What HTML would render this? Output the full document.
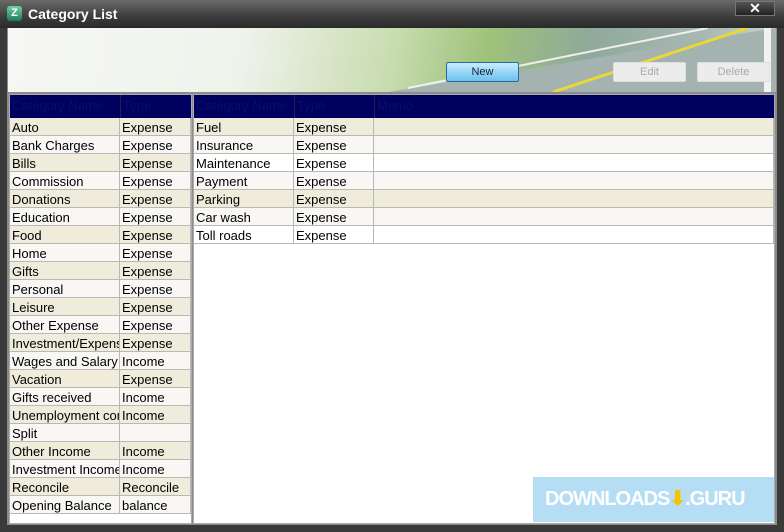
<!DOCTYPE html>
<html><head><style>
*{margin:0;padding:0;box-sizing:border-box}
body{width:784px;height:532px;background:#3a3a3a;position:relative;overflow:hidden;font-family:"Liberation Sans",sans-serif}
.title{position:absolute;left:0;top:0;width:784px;height:28px;background:linear-gradient(#6a6a6a,#3c3c3c 60%,#2a2a2a);}
.title .ic{position:absolute;left:7px;top:6px;width:15px;height:15px;border-radius:3px;background:linear-gradient(#6fd3a8,#1c7a52);color:#fff;font:bold 11px "Liberation Sans";text-align:center;line-height:15px}
.title .t{position:absolute;left:28px;top:6px;color:#fff;font:bold 14px "Liberation Sans",sans-serif}
.x{position:absolute;left:735px;top:1px;width:40px;height:15px;background:linear-gradient(#555,#222);border:1px solid #777;color:#fff;font:bold 14px sans-serif;text-align:center;line-height:13px}
.main{position:absolute;left:7px;top:28px;width:770px;height:497px;background:#8c8c8c}
.banner{position:absolute;left:8px;top:28px;width:768px;height:64px;background:linear-gradient(100deg,#f6f7f4 0%,#f0f3ec 30%,#c8dcb0 50%,#9ec27a 62%,#8fa99a 75%,#a9b9b5 90%,#cfd8d4 100%);overflow:hidden}
.btn{position:absolute;top:34px;height:20px;font:11px "Liberation Sans";text-align:center;line-height:18px;border-radius:2px}
.grid{position:absolute;background:#fff;border:1px solid #aaa}
.hd{position:absolute;top:0;height:23px;background:#000060;color:#0c0c6c;font:13px "Liberation Sans";padding:3px 2px}
.r{position:absolute;height:18px;font:13px "Liberation Sans",sans-serif;color:#000;border-bottom:1px solid #b8b8b8;border-right:1px solid #b8b8b8;padding:2px 2px 0;white-space:nowrap;overflow:hidden;line-height:16px}
.wm{position:absolute;left:533px;top:477px;width:241px;height:45px;background:#b5ddf4;color:#fff;font:bold 20px "Liberation Sans",sans-serif;line-height:45px;padding-left:12px;letter-spacing:-1px;white-space:nowrap;overflow:hidden}
</style></head><body>
<div class="title"><div class="ic">Z</div><div class="t">Category List</div><div class="x">✕</div></div>
<div class="main"></div>
<div class="banner">
<svg width="768" height="64" style="position:absolute;left:0;top:0">
<polygon points="380,64 768,0 768,64" fill="#a4b3b0"/>
<line x1="545" y1="64" x2="740" y2="0" stroke="#e8d83a" stroke-width="3"/>
<line x1="400" y1="60" x2="700" y2="0" stroke="#f0f0f0" stroke-width="2"/>
<rect x="756" y="0" width="7" height="64" fill="#f2f2f2"/>
</svg>
<div class="btn" style="left:438px;width:73px;background:linear-gradient(#c8ecff,#6cc0ee);border:1px solid #2a6aa0;color:#123">New</div>
<div class="btn" style="left:605px;width:73px;background:#ececec;border:1px solid #ddd;color:#aaa">Edit</div>
<div class="btn" style="left:689px;width:73px;background:#ececec;border:1px solid #ddd;color:#aaa">Delete</div>
</div>
<div class="grid" style="left:9px;top:94px;width:183px;height:430px">
<div class="hd" style="left:0;width:110px">Category Name</div><div class="hd" style="left:110px;width:71px;border-left:1px solid #224">Type</div>
<div id="L"></div>
</div>
<div class="grid" style="left:193px;top:94px;width:582px;height:430px">
<div class="hd" style="left:0;width:100px">Category Name</div><div class="hd" style="left:100px;width:80px;border-left:1px solid #224">Type</div><div class="hd" style="left:180px;width:400px;border-left:1px solid #224">Memo</div>
<div id="R"></div>
</div>
<div class="wm">DOWNLOADS<span style="color:#f5c400">⬇</span>.GURU</div>
<script>
var L=[["Auto","Expense"],["Bank Charges","Expense"],["Bills","Expense"],["Commission","Expense"],["Donations","Expense"],["Education","Expense"],["Food","Expense"],["Home","Expense"],["Gifts","Expense"],["Personal","Expense"],["Leisure","Expense"],["Other Expense","Expense"],["Investment/Expense","Expense"],["Wages and Salary","Income"],["Vacation","Expense"],["Gifts received","Income"],["Unemployment comp","Income"],["Split",""],["Other Income","Income"],["Investment Income","Income"],["Reconcile","Reconcile"],["Opening Balance","balance"]];
var R=[["Fuel","Expense"],["Insurance","Expense"],["Maintenance","Expense"],["Payment","Expense"],["Parking","Expense"],["Car wash","Expense"],["Toll roads","Expense"]];
var h="";L.forEach(function(a,i){var t=23+i*18,bg=i%2?"#f8f7f3":"#efecdc";h+='<div class="r" style="left:0;top:'+t+'px;width:110px;background:'+bg+'">'+a[0]+'</div><div class="r" style="left:110px;top:'+t+'px;width:71px;background:'+bg+'">'+a[1]+'</div>';});
document.getElementById("L").innerHTML=h;h="";
R.forEach(function(a,i){var t=23+i*18,bg=i%2?"#f8f7f3":"#efecdc";if(i==2||i==6)bg="#fff";h+='<div class="r" style="left:0;top:'+t+'px;width:100px;background:'+bg+'">'+a[0]+'</div><div class="r" style="left:100px;top:'+t+'px;width:80px;background:'+bg+'">'+a[1]+'</div><div class="r" style="left:180px;top:'+t+'px;width:400px;background:'+bg+'"></div>';});
document.getElementById("R").innerHTML=h;
</script>
</body></html>
